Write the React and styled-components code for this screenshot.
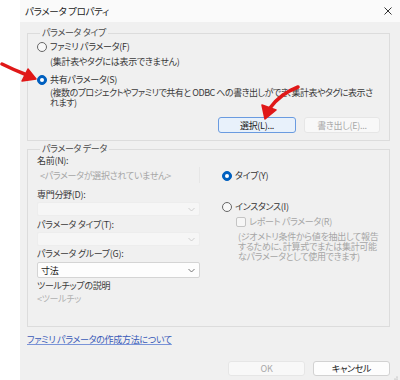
import React from "react";
import styled, { createGlobalStyle } from "styled-components";

const Global = createGlobalStyle`
  html, body { margin: 0; padding: 0; background: #ffffff; }
  body {
    font-family: "Noto Sans CJK JP", "Noto Sans", sans-serif;
    font-size: 9px;
    letter-spacing: -0.3px;
    color: #333333;
    font-feature-settings: "palt";
  }
  * { box-sizing: border-box; }
`;

const Page = styled.div`
  position: relative;
  width: 400px;
  height: 380px;
  display: grid;
  grid-template-columns: 20px 380px;
  overflow: hidden;
  background: #ffffff;
`;

const Dialog = styled.div`
  grid-column: 2;
  width: 380px;
  display: flex;
  flex-direction: column;
  background: #f0f0f0;
`;

const TitleBar = styled.div`
  height: 22px;
  flex: none;
  display: flex;
  align-items: center;
  justify-content: space-between;
  padding: 0 8px 0 5px;
  background: #fafafa;
  font-size: 9.5px;
  color: #1a1a1a;
`;

const Close = styled.span`
  width: 8px;
  height: 8px;
  display: flex;
`;

const Body = styled.div`
  flex: 1;
  display: flex;
  flex-direction: column;
  padding: 5px 10px 0 7px;
`;

const Group = styled.fieldset`
  margin: ${(p) => p.$mt || 0}px 0 0 0;
  padding: 0 9px 0 9px;
  border: 1px solid #dcdcdc;
  min-width: 0;
  height: ${(p) => p.$h}px;
`;

const Legend = styled.legend`
  padding: 0 2px;
  margin-left: 3px;
  line-height: 12px;
  color: #4a4a4a;
`;

const RadioRow = styled.div`
  display: flex;
  align-items: center;
  gap: 3px;
  height: 14px;
  line-height: 14px;
  margin-top: ${(p) => p.$mt || 0}px;
  margin-left: ${(p) => p.$ml || 0}px;
  white-space: nowrap;
`;

const Radio = styled.span`
  width: 10px;
  height: 10px;
  flex: none;
  border-radius: 50%;
  background: ${(p) => (p.$on ? "#0060c0" : "#f8f8f8")};
  border: 1px solid ${(p) => (p.$on ? "#0060c0" : "#666")};
  display: flex;
  align-items: center;
  justify-content: center;
  &::after {
    content: "";
    display: ${(p) => (p.$on ? "block" : "none")};
    width: 4px;
    height: 4px;
    border-radius: 50%;
    background: #fff;
  }
`;

const Check = styled.span`
  width: 10px;
  height: 10px;
  flex: none;
  border: 1px solid #c4c4c4;
  border-radius: 2px;
  background: #f6f6f6;
`;

const DimText = styled.span`
  color: #a6a6a6;
`;

const Sub = styled.div`
  margin-top: ${(p) => p.$mt || 0}px;
  margin-left: ${(p) => p.$ml || 13}px;
  line-height: ${(p) => p.$lh || 12}px;
  letter-spacing: ${(p) => p.$ls ?? -0.3}px;
  color: ${(p) => (p.$dim ? "#a6a6a6" : "#3a3a3a")};
  white-space: ${(p) => (p.$wrap ? "normal" : "nowrap")};
  width: ${(p) => (p.$w ? `${p.$w}px` : "auto")};
`;

const ButtonRow = styled.div`
  display: flex;
  justify-content: flex-end;
  gap: 8px;
  margin-top: ${(p) => p.$mt || 0}px;
`;

const Button = styled.div`
  width: ${(p) => p.$w || 78}px;
  height: ${(p) => p.$h || 16}px;
  display: flex;
  align-items: center;
  justify-content: center;
  border-radius: 3px;
  ${(p) =>
    p.$primary
      ? "background:#e8f1fb;border:1px solid #6a9be0;color:#1a1a1a;"
      : p.$disabled
      ? "background:#f8f8f8;border:1px solid #e6e6e6;color:#a8a8a8;"
      : "background:#fdfdfd;border:1px solid #d2d2d2;color:#1a1a1a;"}
`;

const Columns = styled.div`
  display: flex;
  gap: 22px;
`;

const LeftCol = styled.div`
  width: 168px;
  display: flex;
  flex-direction: column;
`;

const RightCol = styled.div`
  flex: 1;
  display: flex;
  flex-direction: column;
`;

const Label = styled.div`
  line-height: 12px;
  margin-top: ${(p) => p.$mt || 0}px;
  color: ${(p) => (p.$dim ? "#b0b0b0" : "#3a3a3a")};
  white-space: nowrap;
`;

const ReadBox = styled.div`
  height: 16px;
  margin-top: ${(p) => p.$mt || 0}px;
  display: flex;
  align-items: center;
  padding-left: 3px;
  border-right: 1px solid #e6e6e6;
  color: #a6a6a6;
  white-space: nowrap;
`;

const Select = styled.div`
  height: ${(p) => p.$h || 14}px;
  margin-top: ${(p) => p.$mt || 0}px;
  display: flex;
  align-items: center;
  justify-content: space-between;
  padding: 0 4px 0 3px;
  border-radius: 2px;
  ${(p) =>
    p.$enabled
      ? "background:#fdfdfd;border:1px solid #d4d4d4;color:#1a1a1a;"
      : "background:#f6f6f6;border:1px solid #ededed;color:#a6a6a6;"}
`;

const Chevron = ({ dim }) => (
  <svg width="7" height="5" viewBox="0 0 7 5">
    <path d="M0.5 1 L3.5 4 L6.5 1" fill="none" stroke={dim ? "#c8c8c8" : "#666"} strokeWidth="0.9" />
  </svg>
);

const Footer = styled.div`
  flex: 1;
  display: flex;
  flex-direction: column;
`;

const Link = styled.a`
  margin-top: 7px;
  line-height: 12px;
  color: #3a5bb8;
  text-decoration: underline;
  text-decoration-color: #7a94d8;
  width: fit-content;
`;

const Grip = styled.div`
  position: absolute;
  right: 2px;
  bottom: 1px;
  width: 7px;
  height: 7px;
`;

const Overlay = styled.svg`
  position: absolute;
  left: 0;
  top: 0;
  pointer-events: none;
`;

export default function App() {
  return (
    <>
      <Global />
      <Page>
        <Dialog>
          <TitleBar>
            <span>パラメータ&nbsp;プロパティ</span>
            <Close>
              <svg width="8" height="8" viewBox="0 0 8 8">
                <path d="M0.5 0.5 L7.5 7.5 M7.5 0.5 L0.5 7.5" stroke="#333" strokeWidth="1" />
              </svg>
            </Close>
          </TitleBar>
          <Body>
            <Group $h={114}>
              <Legend>パラメータ タイプ</Legend>
              <RadioRow $mt={1}>
                <Radio />
                <span>ファミリ パラメータ(F)</span>
              </RadioRow>
              <Sub $mt={2}>(集計表やタグには表示できません)</Sub>
              <RadioRow $mt={5}>
                <Radio $on />
                <span>共有パラメータ(S)</span>
              </RadioRow>
              <Sub $mt={1} $lh={10} $wrap $ls={-0.5}>
                (複数のプロジェクトやファミリで共有と ODBC への書き出しができ、集計表やタグに表示されます)
              </Sub>
              <ButtonRow $mt={9}>
                <Button $primary>選択(L)...</Button>
                <Button $disabled $w={76}>書き出し(E)...</Button>
              </ButtonRow>
            </Group>
            <Group $mt={2} $h={184}>
              <Legend>パラメータ データ</Legend>
              <Columns>
                <LeftCol>
                  <Label>名前(N):</Label>
                  <ReadBox>&lt;パラメータが選択されていません&gt;</ReadBox>
                  <Label $mt={6}>専門分野(D):</Label>
                  <Select $mt={1}>
                    <span />
                    <Chevron dim />
                  </Select>
                  <Label $mt={3}>パラメータ タイプ(T):</Label>
                  <Select $mt={1}>
                    <span />
                    <Chevron dim />
                  </Select>
                  <Label $mt={2}>パラメータ グループ(G):</Label>
                  <Select $mt={2} $h={16} $enabled>
                    <span>寸法</span>
                    <Chevron />
                  </Select>
                  <Label $mt={2}>ツールチップの説明</Label>
                  <Label $mt={1} $dim>&lt;ツールチッ</Label>
                </LeftCol>
                <RightCol>
                  <RadioRow $mt={14}>
                    <Radio $on />
                    <span>タイプ(Y)</span>
                  </RadioRow>
                  <RadioRow $mt={17}>
                    <Radio />
                    <span>インスタンス(I)</span>
                  </RadioRow>
                  <RadioRow $mt={1} $ml={14}>
                    <Check />
                    <DimText>レポート パラメータ(R)</DimText>
                  </RadioRow>
                  <Sub $dim $ml={16} $lh={10} $mt={3} $wrap $w={142}>
                    (ジオメトリ条件から値を抽出して報告するために、計算式でまたは集計可能なパラメータとして使用できます)
                  </Sub>
                </RightCol>
              </Columns>
            </Group>
            <Footer>
              <Link>ファミリ パラメータの作成方法について</Link>
              <ButtonRow $mt={15}>
                <Button $disabled $w={77} $h={15}>OK</Button>
                <Button $w={77} $h={15}>キャンセル</Button>
              </ButtonRow>
            </Footer>
          </Body>
        </Dialog>
        <Grip>
          <svg width="7" height="7" viewBox="0 0 7 7">
            <circle cx="6" cy="2" r="0.6" fill="#999" />
            <circle cx="4" cy="4" r="0.6" fill="#999" />
            <circle cx="6" cy="4" r="0.6" fill="#999" />
            <circle cx="2" cy="6" r="0.6" fill="#999" />
            <circle cx="4" cy="6" r="0.6" fill="#999" />
            <circle cx="6" cy="6" r="0.6" fill="#999" />
          </svg>
        </Grip>
        <Overlay width="400" height="380" viewBox="0 0 400 380">
          <path d="M2 64 Q 14 70 27 75" fill="none" stroke="#e01818" strokeWidth="3.5" strokeLinecap="round" />
          <path d="M36 79 L22 81 L28 69 Z" fill="#e01818" stroke="#e01818" strokeWidth="1.5" strokeLinejoin="round" />
          <path d="M298 87 Q 280 94 270 108" fill="none" stroke="#e01818" strokeWidth="3.5" strokeLinecap="round" />
          <path d="M265 119 L262 105 L276 110 Z" fill="#e01818" stroke="#e01818" strokeWidth="1.5" strokeLinejoin="round" />
        </Overlay>
      </Page>
    </>
  );
}
